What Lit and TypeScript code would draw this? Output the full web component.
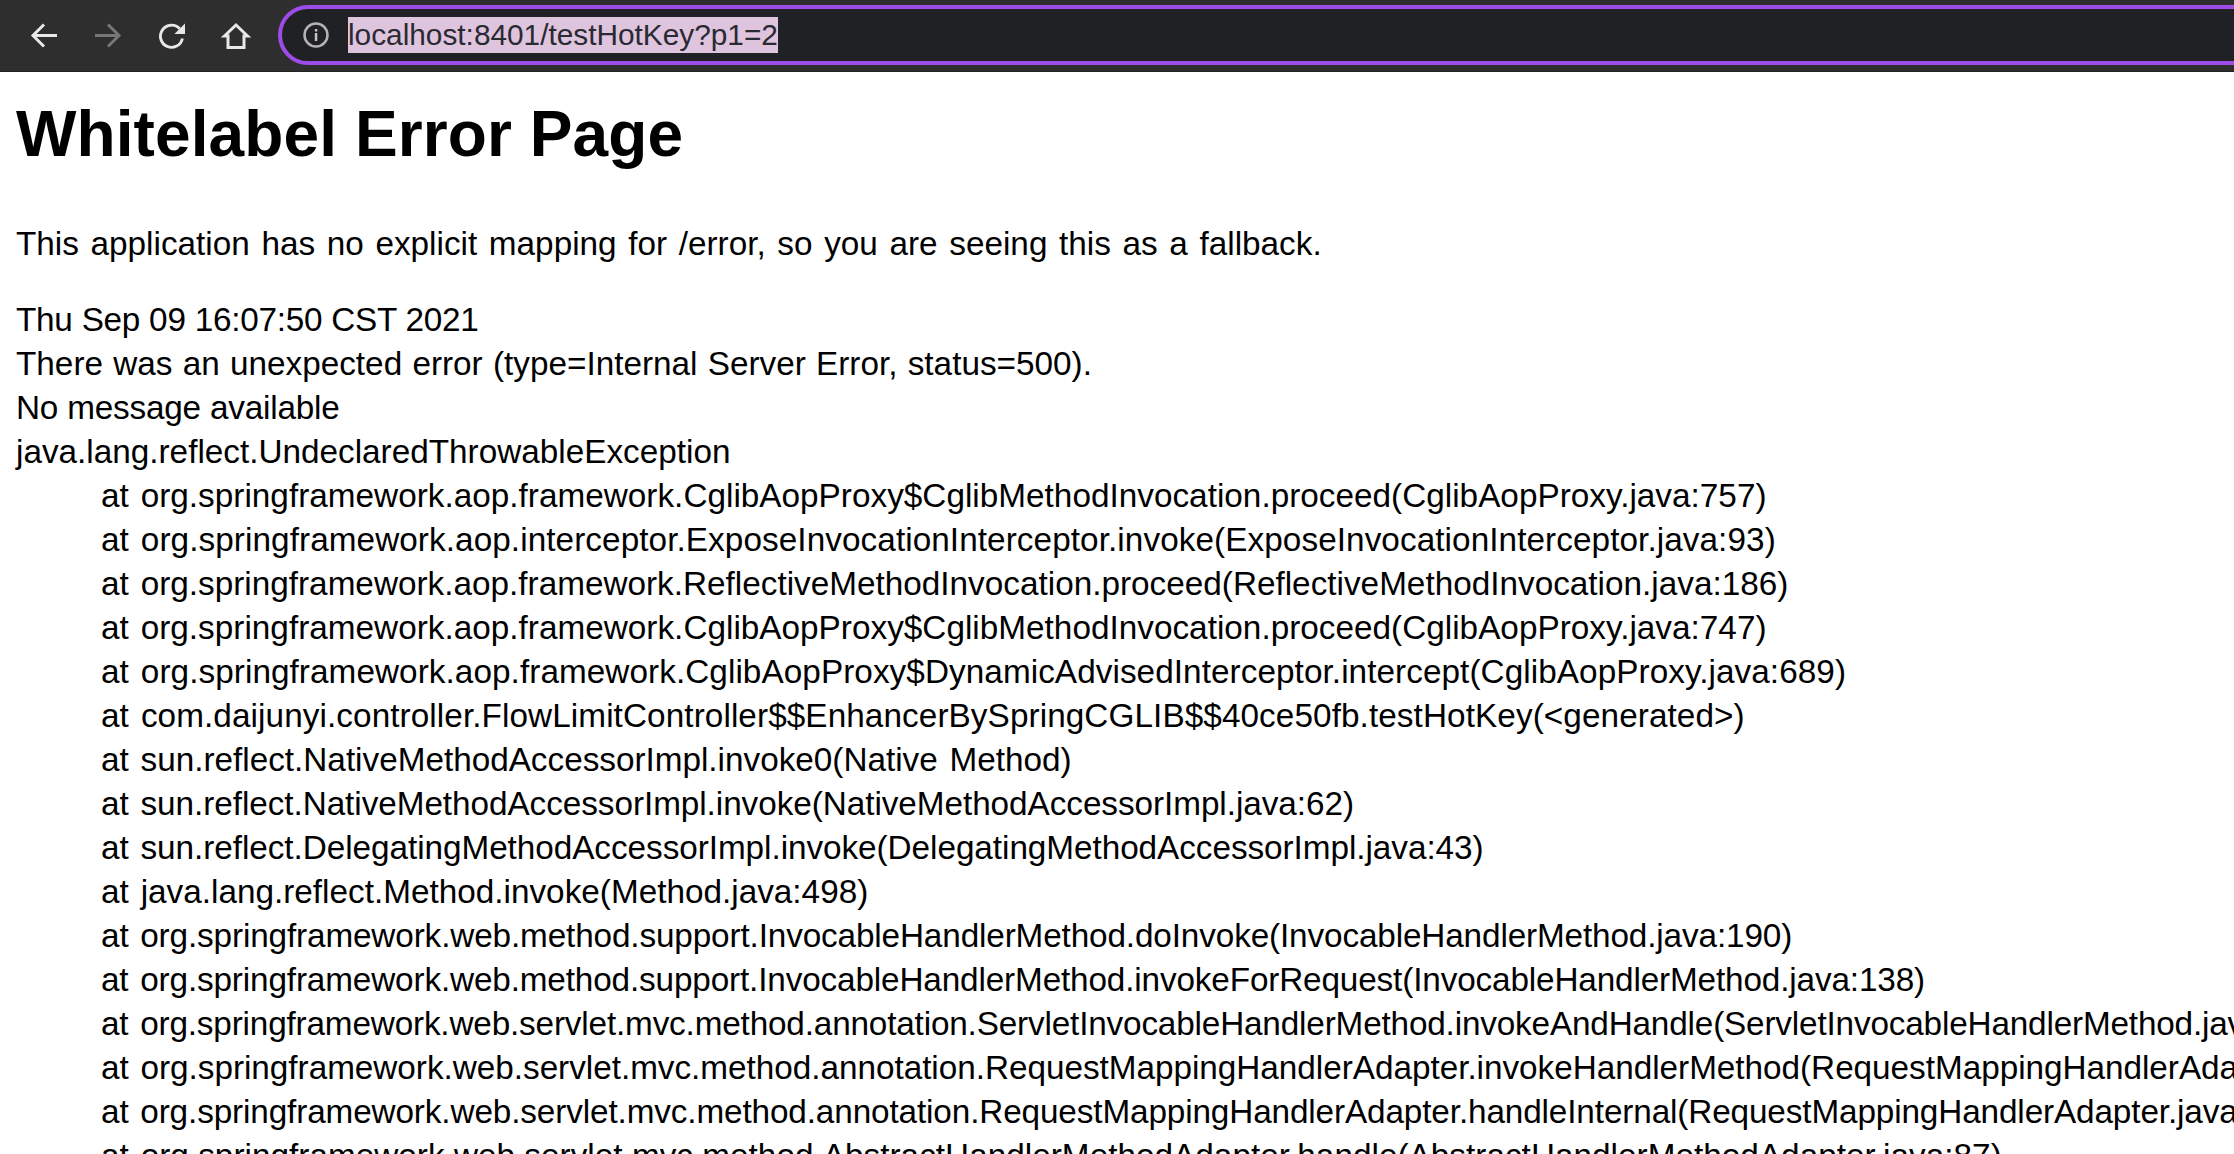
import { LitElement, html, css } from "lit";
import { customElement } from "lit/decorators.js";

// Each frame carries the tracking (px) that brings its right edge in line with the original.
const trace: [string, number][] = [
  ["org.springframework.aop.framework.CglibAopProxy$CglibMethodInvocation.proceed(CglibAopProxy.java:757)", 0.015],
  ["org.springframework.aop.interceptor.ExposeInvocationInterceptor.invoke(ExposeInvocationInterceptor.java:93)", 0.075],
  ["org.springframework.aop.framework.ReflectiveMethodInvocation.proceed(ReflectiveMethodInvocation.java:186)", 0.005],
  ["org.springframework.aop.framework.CglibAopProxy$CglibMethodInvocation.proceed(CglibAopProxy.java:747)", 0.015],
  ["org.springframework.aop.framework.CglibAopProxy$DynamicAdvisedInterceptor.intercept(CglibAopProxy.java:689)", 0.065],
  ["com.daijunyi.controller.FlowLimitController$$EnhancerBySpringCGLIB$$40ce50fb.testHotKey(<generated>)", 0.085],
  ["sun.reflect.NativeMethodAccessorImpl.invoke0(Native Method)", -0.01],
  ["sun.reflect.NativeMethodAccessorImpl.invoke(NativeMethodAccessorImpl.java:62)", -0.055],
  ["sun.reflect.DelegatingMethodAccessorImpl.invoke(DelegatingMethodAccessorImpl.java:43)", -0.05],
  ["java.lang.reflect.Method.invoke(Method.java:498)", 0.005],
  ["org.springframework.web.method.support.InvocableHandlerMethod.doInvoke(InvocableHandlerMethod.java:190)", -0.135],
  ["org.springframework.web.method.support.InvocableHandlerMethod.invokeForRequest(InvocableHandlerMethod.java:138)", -0.145],
  ["org.springframework.web.servlet.mvc.method.annotation.ServletInvocableHandlerMethod.invokeAndHandle(ServletInvocableHandlerMethod.java:106)", -0.17],
  ["org.springframework.web.servlet.mvc.method.annotation.RequestMappingHandlerAdapter.invokeHandlerMethod(RequestMappingHandlerAdapter.java:888)", -0.025],
  ["org.springframework.web.servlet.mvc.method.annotation.RequestMappingHandlerAdapter.handleInternal(RequestMappingHandlerAdapter.java:793)", -0.125],
  ["org.springframework.web.servlet.mvc.method.AbstractHandlerMethodAdapter.handle(AbstractHandlerMethodAdapter.java:87)", 0.025],
];

@customElement("app-root")
export class AppRoot extends LitElement {
  static styles = css`
    :host { display: block; width: 2234px; height: 1154px; overflow: hidden; background: #fff; font-family: "Liberation Sans", Arial, sans-serif; color: #000; }
    .toolbar { height: 72px; background: #2e2e2e; border-bottom: 1px solid #222; display: flex; align-items: center; box-sizing: border-box; padding-left: 31px; gap: 29px; }
    .nav { display: flex; align-items: center; gap: 38px; flex: none; }
    .nav svg { width: 26px; height: 26px; flex: none; fill: none; stroke: #e8e8e8; stroke-width: 3; overflow: visible; }
    .nav svg.off { stroke: #777; }
    .omni { flex: none; width: 2200px; height: 60px; margin-top: -1px; box-sizing: border-box; border: 4px solid #9d4ce8; border-radius: 30px; background: #202124; display: flex; align-items: center; padding-left: 21px; gap: 19px; }
    .info { width: 26px; height: 26px; flex: none; }
    .url { background: #dfc4de; color: #2a2a32; font-size: 29.8px; line-height: 36px; white-space: nowrap; }
    .page { padding: 0 16px; white-space: nowrap; }
    h1 { margin: 0; padding-top: 25px; font-size: 64px; line-height: 74px; font-weight: 700; letter-spacing: 0.1px; }
    .lead { margin: 51px 0 0; font-size: 33.3px; line-height: 44px; word-spacing: 2.4px; }
    .details { margin-top: 32px; font-size: 33.3px; line-height: 44px; }
    .stamp { letter-spacing: -0.25px; }
    .meta { word-spacing: 1px; }
    .note { letter-spacing: -0.2px; }
    .frame { padding-left: 85px; word-spacing: 2.6px; }
  `;
  render() {
    return html`
      <div class="toolbar">
        <div class="nav">
          <svg viewBox="0 0 26 26"><path d="M26 12.5H2M13 1.5 2 12.5l11 11"/></svg>
          <svg class="off" viewBox="0 0 26 26"><path d="M0 12.5h24M13 1.5l11 11-11 11"/></svg>
          <svg viewBox="0 0 27 26"><path d="M21.5 5.5A11.5 11.5 0 1 0 24.3 15.5"/><path d="M27 0v11H16z" fill="#e8e8e8" stroke="none"/></svg>
          <svg viewBox="0 0 26 26"><path d="M5 24.5V13H1.5L13 2l11.500 11H21v11.500z"/></svg>
        </div>
        <div class="omni">
          <svg class="info" viewBox="0 0 26 26"><circle cx="13" cy="13" r="11.500" fill="none" stroke="#b4b4b4" stroke-width="2.500"/><rect x="11.800" y="11" width="2.500" height="8" fill="#c4c4c4"/><rect x="11.800" y="7" width="2.500" height="2.500" fill="#c4c4c4"/></svg>
          <span class="url">localhost:8401/testHotKey?p1=2</span>
        </div>
      </div>
      <div class="page">
        <h1>Whitelabel Error Page</h1>
        <p class="lead">This application has no explicit mapping for /error, so you are seeing this as a fallback.</p>
        <div class="details">
          <div class="stamp">Thu Sep 09 16:07:50 CST 2021</div>
          <div class="meta">There was an unexpected error (type=Internal Server Error, status=500).</div>
          <div class="note">No message available</div>
          <div>java.lang.reflect.UndeclaredThrowableException</div>
          ${trace.map(([t, s]) => html`<div class="frame" style="letter-spacing:${s}px">at ${t}</div>`)}
        </div>
      </div>
    `;
  }
}
